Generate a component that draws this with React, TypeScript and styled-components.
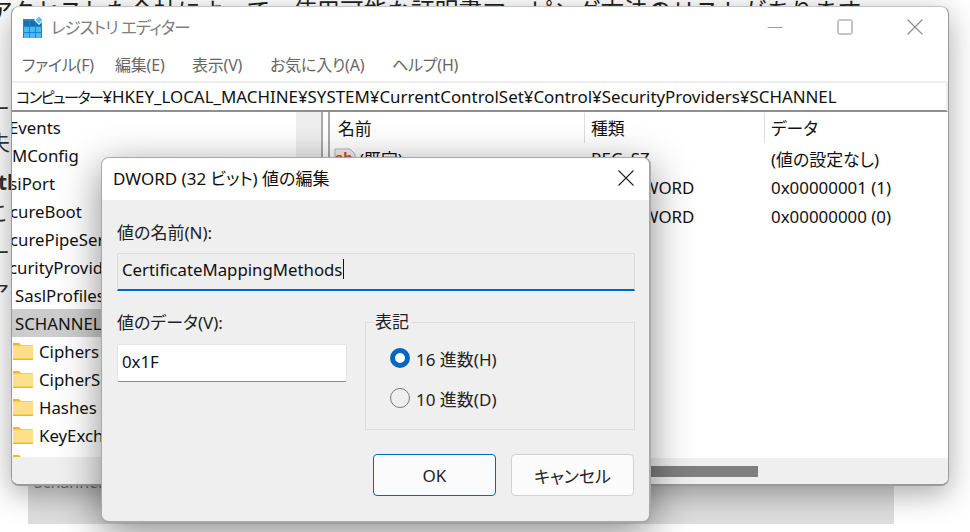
import React from "react";
import styled, { createGlobalStyle } from "styled-components";

const FONT = `"Noto Sans", "Noto Sans CJK JP", "Open Sans", sans-serif`;

const Global = createGlobalStyle`
  html, body { margin: 0; padding: 0; background: #fff; }
  body { font-family: ${FONT}; color: #111; font-feature-settings: "palt"; }
`;

const Desktop = styled.div`
  position: relative;
  width: 970px;
  height: 532px;
  overflow: hidden;
  background: #fff;
`;
const PageTopText = styled.div`
  position: absolute;
  left: -11px;
  top: -4px;
  font-size: 23.7px;
  line-height: 30px;
  white-space: nowrap;
  color: #222;
  font-feature-settings: normal;
`;
const PageLeftGlyph = styled.div<{ $top: number; $bold?: boolean }>`
  position: absolute;
  left: ${(p) => (p.$bold ? -2 : -11)}px;
  top: ${(p) => p.$top}px;
  font-size: 21px;
  line-height: 24px;
  font-weight: ${(p) => (p.$bold ? 700 : 400)};
  color: #333;
`;
const PageGrayBar = styled.div`
  position: absolute;
  left: 28px;
  top: 470px;
  width: 866px;
  height: 54px;
  background: #dedede;
  padding: 2px 0 0 6px;
  box-sizing: border-box;
  font-size: 16px;
  line-height: 20px;
  color: #777;
`;

const RegistryWindow = styled.div`
  position: absolute;
  left: 11px;
  top: 6px;
  width: 938px;
  height: 480px;
  box-sizing: border-box;
  display: flex;
  flex-direction: column;
  background: #fff;
  border: 1px solid #9a9a9a;
  border-top-color: #c4c4c4;
  border-bottom-width: 2px;
  border-radius: 8px;
  overflow: hidden;
  box-shadow: 0 8px 30px rgba(0, 0, 0, 0.34);
`;
const TitleBar = styled.div`
  height: 42px;
  flex: none;
  display: flex;
  align-items: center;
  padding: 0 0 3px 10px;
  box-sizing: border-box;
  gap: 7px;
`;
const TitleText = styled.div`
  font-size: 16.5px;
  letter-spacing: -1px;
  color: #7d7d7d;
  flex: 1;
`;
const WinControls = styled.div`
  display: flex;
  align-items: center;
  padding-right: 25px;
  gap: 54px;
  height: 100%;
`;
const MenuBar = styled.div`
  height: 32px;
  flex: none;
  display: flex;
  align-items: flex-start;
  padding: 4px 0 0 10px;
  box-sizing: border-box;
  font-size: 16px;
  line-height: 24px;
  color: #666;
`;
const MenuItem = styled.span<{ $w: number }>`
  width: ${(p) => p.$w}px;
  flex: none;
  letter-spacing: -0.2px;
`;
const AddressBar = styled.div`
  height: 31px;
  flex: none;
  box-sizing: border-box;
  border-top: 2px solid #eeeeee;
  border-bottom: 2px solid #8f8f8f;
  border-right: 2px solid #eeeeee;
  padding-left: 4px;
  display: flex;
  align-items: center;
  font-size: 16.9px;
  color: #111;
  white-space: nowrap;
`;
const AddressKana = styled.span`
  font-size: 15px;
  letter-spacing: -1.5px;
`;
const Panes = styled.div`
  flex: 1;
  display: flex;
  min-height: 0;
`;
const TreePane = styled.div`
  width: 311px;
  flex: none;
  position: relative;
  display: flex;
  flex-direction: column;
  overflow: hidden;
  border-right: 2px solid #a9a9a9;
  box-sizing: border-box;
`;
const TreeRow = styled.div<{ $indent?: number; $selected?: boolean }>`
  height: 28px;
  flex: none;
  display: flex;
  align-items: center;
  gap: 6px;
  font-size: 16.8px;
  white-space: nowrap;
  padding-left: ${(p) => p.$indent ?? 0}px;
  background: ${(p) => (p.$selected ? "#cccccc" : "transparent")};
  width: 285px;
  box-sizing: border-box;
  overflow: hidden;
`;
const TreeRows = styled.div`
  padding-top: 1px;
  height: 346px;
  overflow: hidden;
  flex: none;
`;
const ClippedLead = styled.span<{ $shift: number }>`
  margin-left: ${(p) => p.$shift}px;
`;
const VScroll = styled.div`
  position: absolute;
  right: 0;
  top: 0;
  bottom: 0;
  width: 25px;
  background: #eeeeee;
`;
const HScrollBar = styled.div`
  position: absolute;
  left: 0;
  right: 0;
  bottom: 0;
  height: 27px;
  background: #efefef;
`;
const ListPane = styled.div`
  flex: 1;
  min-width: 0;
  position: relative;
  border-left: 2px solid #a9a9a9;
  margin-left: 5px;
`;
const HeaderRow = styled.div`
  height: 32px;
  display: grid;
  grid-template-columns: 255px 180px 1fr;
  align-items: center;
  font-size: 16.8px;
`;
const HeaderCell = styled.div`
  height: 30px;
  display: flex;
  align-items: center;
  padding-left: 6px;
  border-right: 1px solid #ddd;
  &:first-child { padding-left: 8px; }
  &:last-child { border-right: 0; }
`;
const DataRow = styled.div`
  height: 29px;
  display: grid;
  grid-template-columns: 255px 180px 1fr;
  align-items: center;
  font-size: 16.9px;
  white-space: nowrap;
`;
const DataCell = styled.div`
  padding-left: 6px;
  display: flex;
  align-items: center;
  gap: 2px;
`;
const IconNudge = styled.span`
  display: flex;
  margin-left: -3px;
`;
const ListScroll = styled.div`
  position: absolute;
  left: 0;
  right: 0;
  bottom: 0;
  height: 26px;
  background: #efefef;
  display: flex;
  align-items: center;
`;
const ListThumb = styled.div`
  width: 428px;
  height: 11px;
  background: #7f7f7f;
`;

const Dialog = styled.div`
  position: absolute;
  left: 101px;
  top: 157px;
  width: 550px;
  height: 366px;
  box-sizing: border-box;
  display: flex;
  flex-direction: column;
  background: #efefef;
  border: 1px solid #a8a8a8;
  border-bottom-width: 2px;
  border-right-width: 2px;
  border-radius: 8px;
  overflow: hidden;
  box-shadow: 0 10px 40px rgba(0, 0, 0, 0.46);
`;
const DialogTitle = styled.div`
  height: 42px;
  flex: none;
  background: #fff;
  display: flex;
  align-items: center;
  justify-content: space-between;
  padding: 0 15px 3px 11px;
  box-sizing: border-box;
  font-size: 17px;
  color: #111;
`;
const DialogBody = styled.div`
  flex: 1;
  padding: 22px 14px 0 15px;
  display: flex;
  flex-direction: column;
`;
const FieldLabel = styled.div`
  font-size: 17px;
  line-height: 22px;
  color: #222;
`;
const NameInput = styled.div`
  margin-top: 9px;
  height: 38px;
  box-sizing: border-box;
  background: #eeeeee;
  border: 1px solid #dcdcdc;
  border-bottom: 2px solid #0067c0;
  display: flex;
  align-items: center;
  padding: 0 0 5px 4px;
  font-size: 16.8px;
  border-radius: 2px 2px 0 0;
  width: 518px;
`;
const Caret = styled.span`
  width: 1px;
  height: 20px;
  background: #111;
  margin-left: 1px;
`;
const MiddleRow = styled.div`
  margin-top: 19px;
  display: flex;
  gap: 18px;
  align-items: flex-start;
`;
const DataColumn = styled.div`
  width: 230px;
  flex: none;
  padding-top: 2px;
`;
const DataInput = styled.div`
  margin-top: 10px;
  height: 38px;
  box-sizing: border-box;
  background: #fff;
  border: 1px solid #e3e3e3;
  border-bottom: 1px solid #8a8a8a;
  display: flex;
  align-items: center;
  padding: 0 0 3px 4px;
  font-size: 16.8px;
  border-radius: 2px;
`;
const GroupBox = styled.fieldset`
  margin: 1px 0 0;
  padding: 5px 0 0 24px;
  width: 271px;
  height: 119px;
  box-sizing: border-box;
  border: 1px solid #dcdcdc;
  min-inline-size: auto;
`;
const GroupLegend = styled.legend`
  font-size: 17px;
  padding: 0 2px 0 0;
  margin-left: -15px;
  line-height: 22px;
  color: #222;
`;
const RadioRow = styled.div`
  height: 40px;
  display: flex;
  align-items: center;
  gap: 6px;
  font-size: 17px;
  color: #222;
  white-space: nowrap;
`;
const RadioMark = styled.span<{ $on?: boolean }>`
  width: 20px;
  height: 20px;
  box-sizing: border-box;
  border-radius: 50%;
  background: ${(p) => (p.$on ? "#fff" : "transparent")};
  border: ${(p) => (p.$on ? "5px solid #0067c0" : "1px solid #777")};
`;
const ButtonRow = styled.div`
  margin-top: 24px;
  display: flex;
  justify-content: flex-end;
  gap: 15px;
  padding-right: 1px;
`;
const Button = styled.button<{ $primary?: boolean }>`
  width: 123px;
  height: 42px;
  border-radius: 4px;
  background: #fbfbfb;
  border: 1px solid ${(p) => (p.$primary ? "#0067c0" : "#d2d2d2")};
  font-family: ${FONT};
  font-feature-settings: "palt";
  font-size: 17px;
  color: #222;
  padding: 0;
`;

const RegIcon = () => (
  <svg width="22" height="22" viewBox="0 0 22 22">
    <rect x="1" y="3" width="19" height="19" fill="#1e86c8" />
    {[0, 1, 2].map((r) =>
      [0, 1, 2].map((c) => (
        <rect
          key={`${r}${c}`}
          x={2 + c * 6}
          y={5 + r * 6}
          width="5"
          height="5"
          fill={r === 0 ? "#1a6fa8" : "#46bdf0"}
        />
      ))
    )}
    <rect x="14" y="1" width="6" height="6" fill="#5cc6ef" stroke="#fff" transform="rotate(45 17 4)" />
  </svg>
);

const Folder = () => (
  <svg width="20" height="17" viewBox="0 0 20 17">
    <path d="M0 0h6l2 2h12v15H0z" fill="#f5b916" />
    <rect x="0" y="2.5" width="20" height="13" fill="#ffe08a" />
  </svg>
);

const StrIcon = () => (
  <svg width="24" height="22" viewBox="0 0 24 22">
    <path d="M2 1h15l5 5v15H2z" fill="#f3efee" stroke="#b5b5b5" />
    <text x="2" y="15" fontSize="15" fontWeight="700" fill="#c9492b" fontFamily="Liberation Sans, sans-serif">ab</text>
  </svg>
);

const Minimize = () => (
  <svg width="16" height="16" viewBox="0 0 16 16">
    <path d="M0.5 8.5h15" stroke="#9a9a9a" />
  </svg>
);
const Maximize = () => (
  <svg width="16" height="16" viewBox="0 0 16 16">
    <rect x="1" y="1" width="14" height="14" rx="1.5" fill="none" stroke="#8a8a8a" />
  </svg>
);
const CloseX = ({ c = "#8a8a8a" }: { c?: string }) => (
  <svg width="16" height="16" viewBox="0 0 16 16">
    <path d="M.5.5l15 15M15.5.5l-15 15" stroke={c} strokeWidth="1.1" fill="none" />
  </svg>
);

export default function App() {
  return (
    <Desktop>
      <Global />
      <PageTopText>アクセスした会社によって、使用可能な証明書マッピング方法のリストがあります。</PageTopText>
      <PageLeftGlyph $top={96}>ー</PageLeftGlyph>
      <PageLeftGlyph $top={130}>夫</PageLeftGlyph>
      <PageLeftGlyph $top={170} $bold>tl</PageLeftGlyph>
      <PageLeftGlyph $top={200}>こ</PageLeftGlyph>
      <PageLeftGlyph $top={240}>ー</PageLeftGlyph>
      <PageLeftGlyph $top={280}>ア</PageLeftGlyph>
      <PageGrayBar>Schannel の設定</PageGrayBar>

      <RegistryWindow>
        <TitleBar>
          <RegIcon />
          <TitleText>レジストリ エディター</TitleText>
          <WinControls>
            <Minimize />
            <Maximize />
            <CloseX />
          </WinControls>
        </TitleBar>
        <MenuBar>
          <MenuItem $w={93}>ファイル(F)</MenuItem>
          <MenuItem $w={77}>編集(E)</MenuItem>
          <MenuItem $w={78}>表示(V)</MenuItem>
          <MenuItem $w={122}>お気に入り(A)</MenuItem>
          <MenuItem $w={90}>ヘルプ(H)</MenuItem>
        </MenuBar>
        <AddressBar>
          <AddressKana>コンピューター</AddressKana>¥HKEY_LOCAL_MACHINE¥SYSTEM¥CurrentControlSet¥Control¥SecurityProviders¥SCHANNEL
        </AddressBar>
        <Panes>
          <TreePane>
            <VScroll />
            <TreeRows>
              <TreeRow><ClippedLead $shift={-3}>Events</ClippedLead></TreeRow>
              <TreeRow>MConfig</TreeRow>
              <TreeRow><ClippedLead $shift={-7}>isiPort</ClippedLead></TreeRow>
              <TreeRow><ClippedLead $shift={-2}>cureBoot</ClippedLead></TreeRow>
              <TreeRow><ClippedLead $shift={-2}>curePipeServers</ClippedLead></TreeRow>
              <TreeRow><ClippedLead $shift={-3}>curityProviders</ClippedLead></TreeRow>
              <TreeRow $indent={3}>SaslProfiles</TreeRow>
              <TreeRow $indent={3} $selected>SCHANNEL</TreeRow>
              <TreeRow $indent={1}><Folder />Ciphers</TreeRow>
              <TreeRow $indent={1}><Folder />CipherSuites</TreeRow>
              <TreeRow $indent={1}><Folder />Hashes</TreeRow>
              <TreeRow $indent={1}><Folder />KeyExchangeAlgorithms</TreeRow>
              <TreeRow $indent={1}><Folder /></TreeRow>
            </TreeRows>
            <HScrollBar />
          </TreePane>
          <ListPane>
            <HeaderRow>
              <HeaderCell>名前</HeaderCell>
              <HeaderCell>種類</HeaderCell>
              <HeaderCell>データ</HeaderCell>
            </HeaderRow>
            <DataRow>
              <DataCell><IconNudge><StrIcon /></IconNudge>(既定)</DataCell>
              <DataCell>REG_SZ</DataCell>
              <DataCell>(値の設定なし)</DataCell>
            </DataRow>
            <DataRow>
              <DataCell />
              <DataCell>REG_DWORD</DataCell>
              <DataCell>0x00000001 (1)</DataCell>
            </DataRow>
            <DataRow>
              <DataCell />
              <DataCell>REG_DWORD</DataCell>
              <DataCell>0x00000000 (0)</DataCell>
            </DataRow>
            <ListScroll>
              <ListThumb />
            </ListScroll>
          </ListPane>
        </Panes>
      </RegistryWindow>

      <Dialog>
        <DialogTitle>
          DWORD (32 ビット) 値の編集
          <CloseX c="#222" />
        </DialogTitle>
        <DialogBody>
          <FieldLabel>値の名前(N):</FieldLabel>
          <NameInput>CertificateMappingMethods<Caret /></NameInput>
          <MiddleRow>
            <DataColumn>
              <FieldLabel>値のデータ(V):</FieldLabel>
              <DataInput>0x1F</DataInput>
            </DataColumn>
            <GroupBox>
              <GroupLegend>表記</GroupLegend>
              <RadioRow><RadioMark $on />16 進数(H)</RadioRow>
              <RadioRow><RadioMark />10 進数(D)</RadioRow>
            </GroupBox>
          </MiddleRow>
          <ButtonRow>
            <Button $primary>OK</Button>
            <Button>キャンセル</Button>
          </ButtonRow>
        </DialogBody>
      </Dialog>
    </Desktop>
  );
}
